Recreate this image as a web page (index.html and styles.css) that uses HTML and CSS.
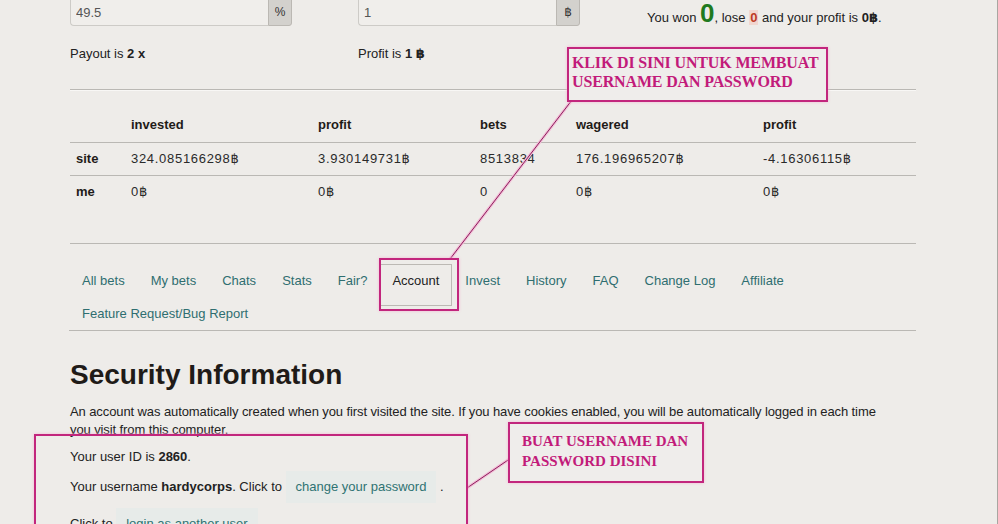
FILE: index.html
```html
<!DOCTYPE html>
<html lang="en">
<head>
    <meta charset="UTF-8">
    <title>Account - Security Information</title>
    <link rel="stylesheet" href="styles.css">
</head>
<body>
<div class="frame">
    <div class="page">
        <div class="bet-row">
            <div class="bet-col">
                <div class="input-group">
                    <input class="field" type="text" value="49.5">
                    <span class="addon">%</span>
                </div>
            </div>
            <div class="bet-col">
                <div class="input-group">
                    <input class="field" type="text" value="1">
                    <span class="addon">฿</span>
                </div>
            </div>
            <div class="result">You won <b class="won">0</b>, lose <b class="lose">0</b> and your profit is <b>0฿</b>.</div>
        </div>
        <div class="payout-row">
            <div class="bet-col">Payout is <b>2 x</b></div>
            <div class="bet-col">Profit is <b>1 ฿</b></div>
        </div>
        <div class="rule"></div>

        <div class="stats">
            <table>
                <tr>
                    <th class="c-label"></th>
                    <th class="c-invested">invested</th>
                    <th class="c-profit">profit</th>
                    <th class="c-bets">bets</th>
                    <th class="c-wagered">wagered</th>
                    <th>profit</th>
                </tr>
                <tr class="line">
                    <th>site</th>
                    <td>324.085166298฿</td>
                    <td>3.930149731฿</td>
                    <td>8513834</td>
                    <td>176.196965207฿</td>
                    <td>-4.16306115฿</td>
                </tr>
                <tr>
                    <th>me</th>
                    <td>0฿</td>
                    <td>0฿</td>
                    <td>0</td>
                    <td>0฿</td>
                    <td>0฿</td>
                </tr>
            </table>
        </div>

        <ul class="tabs">
            <li><a href="#">All bets</a></li>
            <li><a href="#">My bets</a></li>
            <li><a href="#">Chats</a></li>
            <li><a href="#">Stats</a></li>
            <li><a href="#">Fair?</a></li>
            <li class="active"><a href="#">Account</a></li>
            <li><a href="#">Invest</a></li>
            <li><a href="#">History</a></li>
            <li><a href="#">FAQ</a></li>
            <li><a href="#">Change Log</a></li>
            <li><a href="#">Affiliate</a></li>
            <li><a href="#">Feature Request/Bug Report</a></li>
        </ul>

        <h2>Security Information</h2>
        <p class="intro">An account was automatically created when you first visited the site. If you have cookies enabled, you will be automatically logged in each time you visit from this computer.</p>
        <p class="info">Your user ID is <b>2860</b>.</p>
        <div class="info-row">Your username <b>hardycorps</b>. Click to <a class="btn-link" href="#">change your password</a> .</div>
        <div class="info-row">Click to <a class="btn-link" href="#">login as another user</a></div>
    </div>

    <!-- annotations drawn on top of the screenshot -->
    <svg class="arrows" width="998" height="524" viewBox="0 0 998 524">
        <g class="glow">
            <line x1="572" y1="100" x2="450" y2="259"/>
            <line x1="511" y1="458" x2="467" y2="488"/>
        </g>
        <g class="stroke">
            <line x1="572" y1="100" x2="450" y2="259"/>
            <line x1="511" y1="458" x2="467" y2="488"/>
        </g>
    </svg>
    <div class="mark mark-account"></div>
    <div class="mark mark-info"></div>
    <div class="note note-top">KLIK DI SINI UNTUK MEMBUAT<br>USERNAME DAN PASSWORD</div>
    <div class="note note-bottom">BUAT USERNAME DAN<br>PASSWORD DISINI</div>
</div>
</body>
</html>
```

FILE: styles.css
```css
*{
    margin: 0;
    padding: 0;
    box-sizing: border-box;
}
body{
    background: #eeece9;
    font-family: "Liberation Sans", Arial, "DejaVu Sans", sans-serif;
    font-size: 13px;
    color: #222;
}
.frame{
    position: relative;
    width: 998px;
    height: 524px;
    overflow: hidden;
    border-right: 1px solid #a9a6a1;
}
.page{
    width: 916px;
    padding-left: 70px;
}

/* bet inputs */
.bet-row{
    display: flex;
    align-items: flex-start;
    margin-top: -1px;
}
.bet-col{
    width: 288px;
}
.bet-col + .bet-col{
    width: 289px;
}
.input-group{
    display: flex;
    width: 222px;
    height: 27px;
}
.field{
    flex: 1;
    min-width: 0;
    border: 1px solid #cdcbc7;
    border-right: none;
    border-radius: 0 0 0 4px;
    background: #f0eeeb;
    padding-left: 5px;
    font: 13px "Liberation Sans", Arial, sans-serif;
    color: #555;
    outline: none;
}
.addon{
    width: 24px;
    border: 1px solid #bbb8b3;
    border-radius: 0 0 3px 0;
    background: #d3d1cd;
    text-align: center;
    line-height: 25px;
    color: #333;
    font-size: 12px;
}
.result{
    line-height: 30px;
    margin-top: -1px;
    white-space: nowrap;
}
.result .won{
    font-size: 26px;
    color: #1f7a1f;
}
.result .lose{
    color: #bd3a25;
    background: #f1d6cf;
    padding: 0 1px;
}
.payout-row{
    display: flex;
    margin-top: 12px;
    line-height: 17px;
}
.rule{
    margin-top: 27px;
    height: 2px;
    border-top: 1px solid #bab8b4;
    border-bottom: 1px solid #f8f7f5;
}

/* stats table */
.stats{
    margin-top: 18px;
    padding-bottom: 35px;
    border-bottom: 1px solid #bab8b4;
}
.stats table{
    width: 100%;
    border-collapse: collapse;
    table-layout: fixed;
}
.stats th,.stats td{
    height: 33px;
    padding: 0 6px;
    text-align: left;
    vertical-align: middle;
    line-height: 16px;
}
.stats th{
    color: #1f1b18;
}
.stats td{
    letter-spacing: 0.7px;
    color: #2a2a2a;
}
.stats tr:first-child,.stats .line{
    border-bottom: 1px solid #bab8b4;
}
.c-label{ width: 55px; }
.c-invested{ width: 187px; }
.c-profit{ width: 162px; }
.c-bets{ width: 96px; }
.c-wagered{ width: 187px; }

/* tabs */
.tabs{
    display: flex;
    flex-wrap: wrap;
    align-items: flex-start;
    list-style: none;
    margin: 20px 0 0 -1px;
    border-bottom: 1px solid #bab8b4;
}
.tabs a{
    display: block;
    padding: 8px 13px;
    line-height: 17px;
    color: #2f6e70;
    text-decoration: none;
}
.tabs .active a{
    height: 42px;
    margin-bottom: -9px;
    padding: 7px 12px 0 11px;
    border: 1px solid #bcb9b4;
    color: #222;
}

/* security */
h2{
    margin-top: 28px;
    font-size: 28px;
    line-height: 32px;
    color: #1f1b18;
}
.intro{
    margin-top: 12px;
    line-height: 18px;
    max-width: 812px;
    letter-spacing: -0.1px;
}
.info{
    margin-top: 9px;
    line-height: 18px;
}
.info-row{
    margin-top: 5px;
    line-height: 32px;
}
.btn-link{
    display: inline-block;
    padding: 0 10px;
    background: #e7ebe9;
    color: #2f7373;
    text-decoration: none;
}

/* annotations */
.arrows{
    position: absolute;
    left: 0;
    top: 0;
}
.arrows .glow line{
    stroke: #f2bcd6;
    stroke-width: 3;
}
.arrows .stroke line{
    stroke: #8b1f5c;
    stroke-width: 1;
}
.mark,.note{
    position: absolute;
    border: 2px solid #c2267d;
    box-shadow: 0 0 3px #f4b8d5;
}
.mark-account{
    left: 379px;
    top: 258px;
    width: 80px;
    height: 53px;
}
.mark-info{
    left: 34px;
    top: 434px;
    width: 434px;
    height: 120px;
}
.note{
    background: #efedeb;
    font-family: "Liberation Serif", "Times New Roman", serif;
    font-weight: bold;
    color: #c21b7a;
    white-space: nowrap;
}
.note-top{
    left: 567px;
    top: 47px;
    width: 261px;
    height: 55px;
    padding: 4px 0 0 3px;
    font-size: 16px;
    line-height: 19px;
    letter-spacing: -0.15px;
}
.note-bottom{
    left: 508px;
    top: 422px;
    width: 196px;
    height: 61px;
    padding: 7px 0 0 12px;
    font-size: 15px;
    line-height: 20px;
}
```
